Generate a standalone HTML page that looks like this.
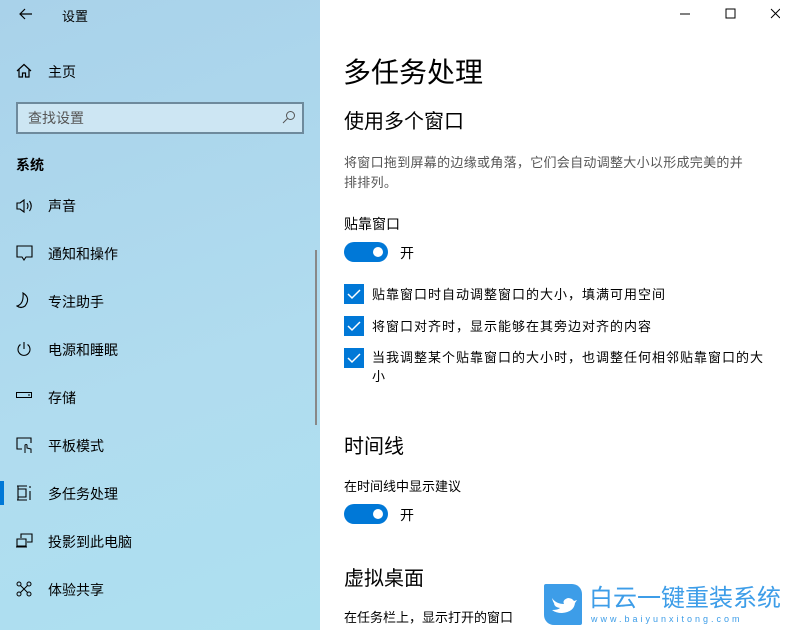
<!DOCTYPE html>
<html><head><meta charset="utf-8"><style>
*{margin:0;padding:0;box-sizing:border-box}
body{width:797px;height:630px;overflow:hidden;font-family:"Liberation Sans","Noto Sans CJK SC",sans-serif;position:relative;background:#fff;color:#000}
.side{position:absolute;left:0;top:0;width:320px;height:630px;background:linear-gradient(160deg,#a9d2ea,#b0dcef 60%,#ade0f0)}
.t{position:absolute;font-size:14px;white-space:nowrap}
.ic{position:absolute;left:16px}
.main .t{color:#000}
.tog{position:absolute;left:344px;width:44px;height:20px;border-radius:10px;background:#0078d7}
.tog::after{content:"";position:absolute;right:5px;top:5px;width:10px;height:10px;border-radius:5px;background:#fff}
.cb{position:absolute;left:344px;width:20px;height:20px;background:#0078d7}
.ck{letter-spacing:1px}
</style></head><body>
<div class="side">
<svg class="ic" style="left:17px;top:7px" width="16" height="14"><path d="M8 2L3 7L8 12M3 7H15" stroke="#000" fill="none" stroke-width="1.2"/></svg>
<div class="t" style="left:62px;top:6px;font-size:13px">设置</div>
<svg class="ic" style="top:63px" width="16" height="16"><path d="M1 8L8 1.5L15 8M3 6.5V14H6.5V10H9.5V14H13V6.5" stroke="#000" fill="none" stroke-width="1.2"/></svg>
<div class="t" style="left:48px;top:62px;font-size:14px">主页</div>
<div style="position:absolute;left:16px;top:102px;width:288px;height:32px;border:2px solid #6e8a9c;background:#cde6f3"></div>
<div class="t" style="left:28px;top:108px;color:#555">查找设置</div>
<svg style="position:absolute;left:282px;top:110px" width="14" height="14"><circle cx="8.5" cy="5.5" r="4" stroke="#555" fill="none"/><path d="M5.5 8.5L1 13" stroke="#555"/></svg>
<div class="t" style="left:16px;top:155px;font-weight:bold">系统</div>
<svg class="ic" style="top:198px" width="18" height="16"><path d="M1 5H4L8 2V14L4 11H1Z M11 5Q13 8 11 11 M13.5 3Q17 8 13.5 13" stroke="#000" fill="none" stroke-width="1.1"/></svg>
<div class="t" style="left:48px;top:196px">声音</div>
<svg class="ic" style="top:245px" width="18" height="16"><path d="M1 1H16V12H10L8 15L6 12H1Z" stroke="#000" fill="none" stroke-width="1.1"/></svg>
<div class="t" style="left:48px;top:244px">通知和操作</div>
<svg class="ic" style="top:292px" width="16" height="18"><path d="M7 1Q15 6 9 14Q5 17 1 14Q8 12 7 1Z" stroke="#000" fill="none" stroke-width="1.1"/></svg>
<div class="t" style="left:48px;top:292px">专注助手</div>
<svg class="ic" style="top:341px" width="16" height="16"><path d="M4.5 3.5A6 6 0 1 0 11.5 3.5M8 1V8" stroke="#000" fill="none" stroke-width="1.1"/></svg>
<div class="t" style="left:48px;top:340px">电源和睡眠</div>
<svg class="ic" style="top:392px" width="18" height="8"><rect x="0.5" y="0.5" width="15" height="5" stroke="#000" fill="none"/><path d="M12 3H14" stroke="#000"/></svg>
<div class="t" style="left:48px;top:388px">存储</div>
<svg class="ic" style="top:437px" width="18" height="18"><path d="M6 12H1V1H15V6" stroke="#000" fill="none" stroke-width="1.1"/><path d="M9 16V8Q10.5 7 11 8V11L15 12V16" stroke="#000" fill="none"/></svg>
<div class="t" style="left:48px;top:436px">平板模式</div>
<div style="position:absolute;left:0;top:481px;width:4px;height:24px;background:#0078d7"></div>
<svg class="ic" style="top:485px" width="18" height="16"><path d="M1 1H11M1 15H11M2 1V15M2 4H10V12H2M14 1V3M14 6V15" stroke="#000" fill="none" stroke-width="1.1"/></svg>
<div class="t" style="left:48px;top:484px">多任务处理</div>
<svg class="ic" style="top:533px" width="18" height="16"><path d="M5 5V1H16V9H11M1 6H10V13H1ZM0 14H11" stroke="#000" fill="none" stroke-width="1.1"/></svg>
<div class="t" style="left:48px;top:532px">投影到此电脑</div>
<svg class="ic" style="top:581px" width="16" height="16"><path d="M3 3L13 13M13 3L3 13" stroke="#000"/><circle cx="3" cy="3" r="2" fill="#b0dcef" stroke="#000"/><circle cx="13" cy="3" r="2" fill="#b0dcef" stroke="#000"/><circle cx="3" cy="13" r="2" fill="#b0dcef" stroke="#000"/><circle cx="13" cy="13" r="2" fill="#b0dcef" stroke="#000"/></svg>
<div class="t" style="left:48px;top:580px">体验共享</div>
<div style="position:absolute;left:315px;top:250px;width:2px;height:175px;background:#888"></div>
</div>
<div class="main">
<svg style="position:absolute;left:680px;top:8px" width="100" height="12"><path d="M0 6H10M46 1H55V10H46ZM91 1L100 10M100 1L91 10" stroke="#000" fill="none"/></svg>
<div class="t" style="left:343px;top:51px;font-size:28px">多任务处理</div>
<div class="t" style="left:344px;top:105px;font-size:20px">使用多个窗口</div>
<div class="t" style="left:344px;top:153px;font-size:13px;color:#555;line-height:20px;letter-spacing:0.3px">将窗口拖到屏幕的边缘或角落，它们会自动调整大小以形成完美的并<br>排排列。</div>
<div class="t" style="left:344px;top:214px">贴靠窗口</div>
<div class="tog" style="top:242px"></div>
<div class="t" style="left:400px;top:243px">开</div>
<div class="cb" style="top:284px"></div><svg style="position:absolute;left:347px;top:287px" width="14" height="14"><path d="M1 7L5 11L13 3" stroke="#fff" fill="none" stroke-width="1.5"/></svg>
<div class="t ck" style="left:372px;top:284px;font-size:13px">贴靠窗口时自动调整窗口的大小，填满可用空间</div>
<div class="cb" style="top:316px"></div><svg style="position:absolute;left:347px;top:319px" width="14" height="14"><path d="M1 7L5 11L13 3" stroke="#fff" fill="none" stroke-width="1.5"/></svg>
<div class="t ck" style="left:372px;top:316px;font-size:13px">将窗口对齐时，显示能够在其旁边对齐的内容</div>
<div class="cb" style="top:348px"></div><svg style="position:absolute;left:347px;top:351px" width="14" height="14"><path d="M1 7L5 11L13 3" stroke="#fff" fill="none" stroke-width="1.5"/></svg>
<div class="t ck" style="left:372px;top:348px;font-size:13px;line-height:19px">当我调整某个贴靠窗口的大小时，也调整任何相邻贴靠窗口的大<br>小</div>
<div class="t" style="left:344px;top:430px;font-size:20px">时间线</div>
<div class="t" style="left:344px;top:476px;font-size:13px">在时间线中显示建议</div>
<div class="tog" style="top:504px"></div>
<div class="t" style="left:400px;top:505px">开</div>
<div class="t" style="left:344px;top:562px;font-size:20px">虚拟桌面</div>
<div class="t" style="left:344px;top:607px;font-size:13px">在任务栏上，显示打开的窗口</div>
<div style="position:absolute;left:544px;top:584px;width:38px;height:41px;background:#3d9de8;border-radius:2px 10px 2px 10px"></div>
<svg style="position:absolute;left:550px;top:592px" width="28" height="24"><path d="M2 6Q6 12 14 12Q12 8 18 6Q22 6 24 9L27 8L25 11Q24 20 12 21Q6 21 2 18Q8 18 10 16Q4 15 4 11Q3 10 2 6Z" fill="#fff"/></svg>
<div class="t" style="left:589px;top:586px;font-size:24px;color:#3d9de8;line-height:26px">白云一键重装系统</div>
<div class="t" style="left:591px;top:614px;font-size:9px;color:#3d9de8;letter-spacing:3px">www.baiyunxitong.com</div>
</div>
</body></html>
